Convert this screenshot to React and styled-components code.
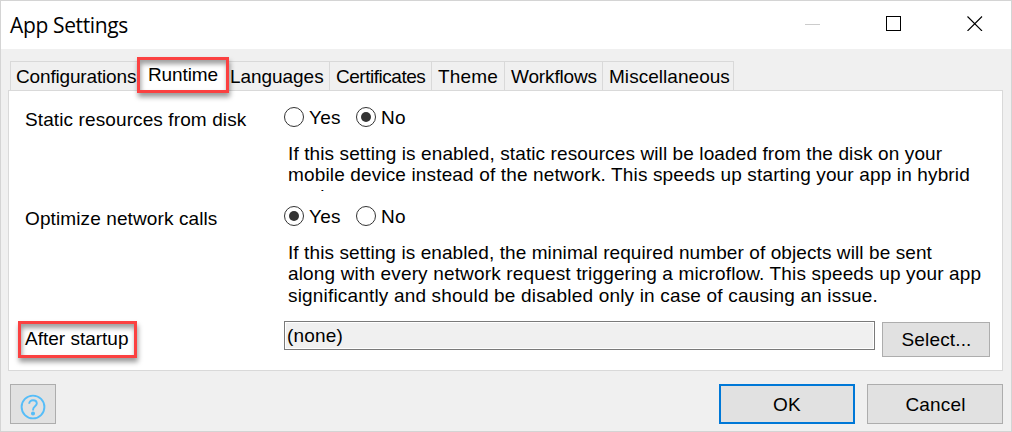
import React from "react";
import styled, { createGlobalStyle } from "styled-components";

const GlobalStyle = createGlobalStyle`
  * { box-sizing: border-box; }
  body { margin: 0; background: #fff; }
`;

const Window = styled.div`
  width: 1012px;
  height: 432px;
  display: flex;
  flex-direction: column;
  border: 1px solid #d4d4d4;
  background: #f0f0f0;
  color: #000;
  font: 19px/21.2px "Liberation Sans", Arial, sans-serif;
  overflow: hidden;
`;

const TitleBar = styled.header`
  height: 48px;
  flex: none;
  display: flex;
  justify-content: space-between;
  background: #fff;
  padding: 0 28px 0 9px;
`;

const Title = styled.h1`
  margin: 0;
  font: 400 21px/48px "Open Sans", "Noto Sans", sans-serif;
  letter-spacing: -0.36px;
  white-space: nowrap;
`;

const Controls = styled.div`
  display: flex;
  gap: 65px;
  padding-top: 14px;
`;

const Glyph = styled.svg`
  width: 16px;
  height: 16px;
  display: block;
  fill: none;
  shape-rendering: ${(p) => (p.$crisp ? "crispEdges" : "auto")};
`;

const TabStrip = styled.nav`
  height: 29px;
  flex: none;
  display: flex;
  margin: 12px 0 0 9px;
`;

const Tab = styled.div`
  width: ${(p) => p.$width}px;
  flex: none;
  border-top: 1px solid #d9d9d9;
  border-right: 1px solid #d9d9d9;
  border-left: ${(p) => (p.$first ? "1px solid #d9d9d9" : "0")};
  padding: 4px 0 0 ${(p) => p.$inset}px;
  letter-spacing: ${(p) => p.$spacing || 0}px;
  white-space: nowrap;
`;

const SelectedTab = styled.div`
  width: 92px;
  height: 36px;
  flex: none;
  margin: -4px -1px 0 -2px;
  position: relative;
  z-index: 1;
  border: 3px solid #fb4141;
  background: #fff;
  padding: 4px 0 0 8px;
  letter-spacing: -0.1px;
  box-shadow: 1px 4px 5px rgba(0, 0, 0, 0.4), inset 1px 4px 5px rgba(0, 0, 0, 0.38);
`;

const Panel = styled.main`
  width: 995px;
  height: 281px;
  flex: none;
  margin-left: 7px;
  border: 1px solid #d9d9d9;
  background: #fff;
  padding: 16px 12px 0 16px;
`;

const Setting = styled.section`
  display: grid;
  grid-template-columns: 259px 1fr;
  height: ${(p) => p.$height}px;
`;

const Label = styled.div`
  padding-top: 2px;
  letter-spacing: 0.11px;
`;

const Field = styled.div`
  min-width: 0;
`;

const RadioGroup = styled.div`
  display: flex;
  height: 20px;
`;

const Option = styled.div`
  display: flex;
  gap: 5px;
  width: 72px;
  line-height: 21px;
  letter-spacing: 0.2px;
`;

const Radio = styled.span`
  width: 20px;
  height: 20px;
  border: 1px solid #333;
  border-radius: 50%;
  display: grid;
  place-items: center;
  &::after {
    content: "";
    width: 10px;
    height: 10px;
    border-radius: 50%;
    background: ${(p) => (p.$on ? "#333" : "transparent")};
  }
`;

const Hint = styled.div`
  margin: 16px 0 0 4px;
  height: ${(p) => p.$height}px;
  overflow: hidden;
`;

const HintLine = styled.div`
  width: max-content;
  white-space: nowrap;
  margin-top: ${(p) => p.$drop || 0}px;
  letter-spacing: ${(p) => p.$spacing || 0}px;
`;

const StartupRow = styled.section`
  display: flex;
  align-items: flex-start;
`;

const MarkedLabel = styled.div`
  width: 119px;
  height: 37px;
  margin: 0 147px 0 -7px;
  border: 3px solid #fb4141;
  padding: 4px 0 0 4px;
  white-space: nowrap;
  box-shadow: 1px 4px 5px rgba(0, 0, 0, 0.4), inset 1px 4px 5px rgba(0, 0, 0, 0.38);
`;

const ReadOnlyBox = styled.div`
  width: 591px;
  height: 29px;
  border: 1px solid #7a7a7a;
  box-shadow: inset 0 0 0 1px #fff;
  background: #f0f0f0;
  padding: 3px 0 0 2px;
  letter-spacing: 0.2px;
`;

const Button = styled.button`
  width: ${(p) => p.$width}px;
  height: ${(p) => p.$height || 40}px;
  padding: ${(p) => p.$pad || "1px 0 0"};
  margin: ${(p) => p.$margin || 0};
  border: ${(p) => (p.$primary ? "2px solid #0078d7" : "1px solid #adadad")};
  border-radius: 0;
  background: #e1e1e1;
  color: #000;
  font: inherit;
  letter-spacing: 0.15px;
  display: flex;
  align-items: center;
  justify-content: center;
`;

const Footer = styled.footer`
  display: flex;
  padding: 13px 8px 0 9px;
`;

const HelpIcon = styled.svg`
  width: 26px;
  height: 26px;
  display: block;
  fill: none;
  stroke: #56bdf8;
  stroke-width: 1.9;
`;

function Choice({ yes }) {
  return (
    <RadioGroup>
      <Option><Radio $on={yes} />Yes</Option>
      <Option><Radio $on={!yes} />No</Option>
    </RadioGroup>
  );
}

export default function App() {
  return (
    <>
      <GlobalStyle />
      <Window>
        <TitleBar>
          <Title>App Settings</Title>
          <Controls>
            <Glyph $crisp viewBox="0 0 16 16"><path d="M0 9.5h15" stroke="#ccc" /></Glyph>
            <Glyph $crisp viewBox="0 0 16 16"><path d="M.5 1.5h14v14h-14z" stroke="#000" /></Glyph>
            <Glyph viewBox="0 0 16 16"><path d="M.5 1.5l14.5 14.5M15 1.5L.5 16" stroke="#000" strokeWidth="1.1" /></Glyph>
          </Controls>
        </TitleBar>
        <TabStrip>
          <Tab $first $width={129} $inset={5} $spacing={-0.16}>Configurations</Tab>
          <SelectedTab>Runtime</SelectedTab>
          <Tab $width={102} $inset={2} $spacing={-0.05}>Languages</Tab>
          <Tab $width={102} $inset={6} $spacing={-0.47}>Certificates</Tab>
          <Tab $width={73} $inset={6} $spacing={0.15}>Theme</Tab>
          <Tab $width={98} $inset={6} $spacing={-0.15}>Workflows</Tab>
          <Tab $width={131} $inset={6} $spacing={0.04}>Miscellaneous</Tab>
        </TabStrip>
        <Panel>
          <Setting $height={99}>
            <Label>Static resources from disk</Label>
            <Field>
              <Choice yes={false} />
              <Hint $height={48}>
                <HintLine $spacing={0.11}>If this setting is enabled, static resources will be loaded from the disk on your</HintLine>
                <HintLine $spacing={0.145}>mobile device instead of the network. This speeds up starting your app in hybrid</HintLine>
                <HintLine $spacing={0.5} $drop={0.6}>environment.</HintLine>
              </Hint>
            </Field>
          </Setting>
          <Setting $height={115}>
            <Label>Optimize network calls</Label>
            <Field>
              <Choice yes />
              <Hint $height={70}>
                <HintLine $spacing={0.09}>If this setting is enabled, the minimal required number of objects will be sent</HintLine>
                <HintLine $spacing={0.155}>along with every network request triggering a microflow. This speeds up your app</HintLine>
                <HintLine $spacing={0.175} $drop={0.6}>significantly and should be disabled only in case of causing an issue.</HintLine>
              </Hint>
            </Field>
          </Setting>
          <StartupRow>
            <MarkedLabel>After startup</MarkedLabel>
            <ReadOnlyBox>(none)</ReadOnlyBox>
            <Button $width={108} $height={35} $pad="1px 0 0 1px" $margin="1px 0 0 7px">Select...</Button>
          </StartupRow>
        </Panel>
        <Footer>
          <Button $width={46} $pad="6px 0 0" aria-label="Help">
            <HelpIcon viewBox="0 0 26 26">
              <circle cx="13" cy="13" r="11.4" />
              <path d="M9.2 9.7C9.2 7.5 10.8 6.2 13 6.2s3.8 1.3 3.8 3.4c0 2.5-3.7 2.9-3.7 5.8v1" />
              <circle cx="13" cy="19.5" r="1.1" fill="#56bdf8" />
            </HelpIcon>
          </Button>
          <Button $primary $width={136} $margin="0 12px 0 auto">OK</Button>
          <Button $width={136} $pad="1px 0 0 1px">Cancel</Button>
        </Footer>
      </Window>
    </>
  );
}
